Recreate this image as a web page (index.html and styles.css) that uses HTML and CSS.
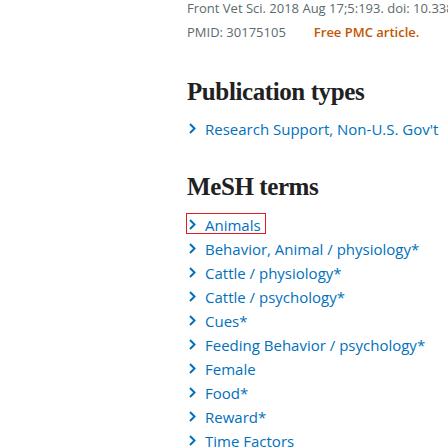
FILE: index.html
```html
<!DOCTYPE html>
<html>
<head>
<meta charset="utf-8">
<link rel="stylesheet" href="styles.css">
</head>
<body>
<div class="page">
  <div class="cite">
    <div class="line">Front Vet Sci. 2018 Aug 17;5:193. doi: 10.3389/fvets.2018.00193.</div>
    <div class="line">PMID: 30175105<span class="pmc">Free PMC article.</span></div>
  </div>

  <h2 class="heading pub">Publication types</h2>
  <ul class="terms pub-list">
    <li><a class="term"><svg class="chev" width="7" height="11" viewBox="0 0 7 11"><polyline points="1,1 5.5,5.5 1,10"/></svg>Research Support, Non-U.S. Gov't</a></li>
  </ul>

  <h2 class="heading mesh">MeSH terms</h2>
  <ul class="terms mesh-list">
    <li><a class="term focus"><svg class="chev" width="7" height="11" viewBox="0 0 7 11"><polyline points="1,1 5.5,5.5 1,10"/></svg>Animals</a></li>
    <li><a class="term"><svg class="chev" width="7" height="11" viewBox="0 0 7 11"><polyline points="1,1 5.5,5.5 1,10"/></svg>Behavior, Animal / physiology*</a></li>
    <li><a class="term"><svg class="chev" width="7" height="11" viewBox="0 0 7 11"><polyline points="1,1 5.5,5.5 1,10"/></svg>Cattle / physiology*</a></li>
    <li><a class="term"><svg class="chev" width="7" height="11" viewBox="0 0 7 11"><polyline points="1,1 5.5,5.5 1,10"/></svg>Cattle / psychology*</a></li>
    <li><a class="term"><svg class="chev" width="7" height="11" viewBox="0 0 7 11"><polyline points="1,1 5.5,5.5 1,10"/></svg>Cues*</a></li>
    <li><a class="term"><svg class="chev" width="7" height="11" viewBox="0 0 7 11"><polyline points="1,1 5.5,5.5 1,10"/></svg>Feeding Behavior / psychology*</a></li>
    <li><a class="term"><svg class="chev" width="7" height="11" viewBox="0 0 7 11"><polyline points="1,1 5.5,5.5 1,10"/></svg>Female</a></li>
    <li><a class="term"><svg class="chev" width="7" height="11" viewBox="0 0 7 11"><polyline points="1,1 5.5,5.5 1,10"/></svg>Food*</a></li>
    <li><a class="term"><svg class="chev" width="7" height="11" viewBox="0 0 7 11"><polyline points="1,1 5.5,5.5 1,10"/></svg>Reward*</a></li>
    <li><a class="term"><svg class="chev" width="7" height="11" viewBox="0 0 7 11"><polyline points="1,1 5.5,5.5 1,10"/></svg>Time Factors</a></li>
  </ul>
</div>
</body>
</html>
```

FILE: styles.css
```css
html, body {
  margin: 0;
  padding: 0;
  background: #ffffff;
  overflow: hidden;
}
.page {
  width: 448px;
  height: 448px;
  overflow: hidden;
  padding-left: 187px;
  box-sizing: border-box;
  font-family: "Open Sans", "Noto Sans", sans-serif;
  white-space: nowrap;
}
.cite {
  font-size: 13px;
  color: #5b6b6b;
}
.cite .line {
  height: 24px;
  line-height: 24px;
}
.cite .line:first-child {
  margin-top: -4px;
}
.pmc {
  color: #c05600;
  font-weight: 600;
  margin-left: 28px;
}
.heading {
  font-family: "Liberation Serif", "DejaVu Serif", serif;
  font-weight: bold;
  font-size: 25px;
  letter-spacing: -0.4px;
  color: #212121;
  margin: 0;
  height: 28px;
  line-height: 28px;
}
.pub {
  margin-top: 34px;
}
.mesh {
  margin-top: 32px;
}
.terms {
  list-style: none;
  margin: 0;
  padding: 0;
}
.pub-list {
  margin-top: 11px;
}
.mesh-list {
  margin-top: 12px;
}
.terms li {
  height: 24px;
  line-height: 24px;
  font-size: 15px;
}
.term {
  display: inline-block;
  color: #0071bc;
  font-size: 15px;
  line-height: 24px;
}
.chev {
  display: inline-block;
  vertical-align: 1px;
  margin: 0 9px 0 2px;
  fill: none;
  stroke: #0071bc;
  stroke-width: 2;
}
.term.focus {
  vertical-align: top;
  height: 21px;
  margin-left: -1px;
  padding: 0 5px 0 1px;
  outline: 1px solid #e51c23;
  outline-offset: -1px;
}
```
